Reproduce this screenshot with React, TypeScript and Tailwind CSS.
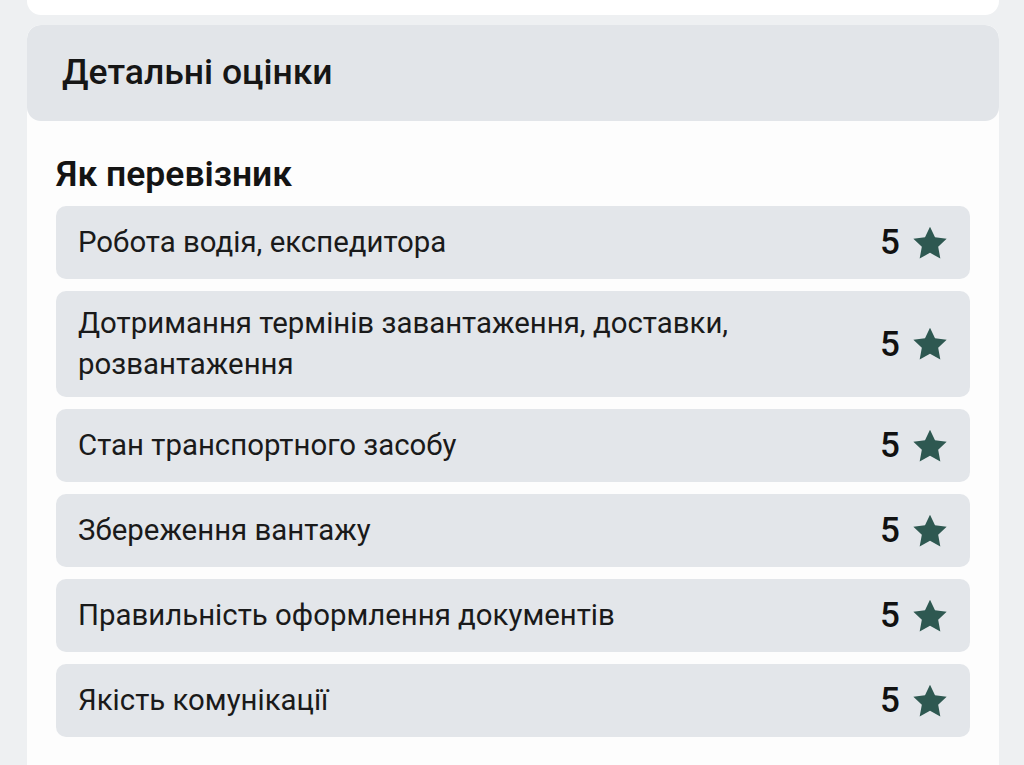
import { ReactNode } from 'react';

const ratings = [
  { id: 1, label: 'Робота водія, експедитора', score: 5 },
  { id: 2, label: 'Дотримання термінів завантаження, доставки, розвантаження', score: 5 },
  { id: 3, label: 'Стан транспортного засобу', score: 5 },
  { id: 4, label: 'Збереження вантажу', score: 5 },
  { id: 5, label: 'Правильність оформлення документів', score: 5 },
  { id: 6, label: 'Якість комунікації', score: 5 },
];

function StarIcon() {
  return (
    <svg viewBox="0 0 24 24" className="h-[40px] w-[40px] shrink-0" aria-hidden>
      <polygon
        fill="#2e5851"
        points="12,2.2 15,8.6 22,9.5 16.9,14.3 18.2,21.3 12,17.9 5.8,21.3 7.1,14.3 2,9.5 9,8.6"
      />
    </svg>
  );
}

function RatingRow({ label, score }: Readonly<{ label: string; score: number }>) {
  return (
    <div className="flex min-h-[73px] items-center justify-between gap-6 rounded-[10px] bg-[#e3e6ea] py-3 pl-[22px] pr-[20px]">
      <p className="text-[29.4px] leading-[41px] text-[#1a1a1a]">{label}</p>
      <div className="flex shrink-0 items-center gap-[10px]">
        <span className="text-[35px] font-medium leading-none text-[#111]">{score}</span>
        <StarIcon />
      </div>
    </div>
  );
}

function Card({ children }: Readonly<{ children: ReactNode }>) {
  return <section className="overflow-hidden rounded-t-[14px] bg-[#fdfdfd]">{children}</section>;
}

export default function App() {
  return (
    <div
      className="min-h-[765px] w-[1024px] bg-[#eef0f2] pl-[27px] pr-[25px]"
      style={{ fontFamily: 'Roboto, "Noto Sans", sans-serif' }}
    >
      <div className="mb-[10px] h-[15px] rounded-b-[14px] bg-white" />
      <Card>
        <header className="flex h-[96px] items-center rounded-[14px] bg-[#e2e5e9] px-[35px]">
          <h2 className="text-[35.5px] font-medium text-[#161616]">Детальні оцінки</h2>
        </header>
        <div className="px-[29px] pb-[40px] pt-[33px]">
          <h3 className="mb-[12px] text-[35.5px] font-semibold leading-[40px] text-[#141414]">Як перевізник</h3>
          <div className="flex flex-col gap-3">
            {ratings.map((r) => (
              <RatingRow key={r.id} label={r.label} score={r.score} />
            ))}
          </div>
        </div>
      </Card>
    </div>
  );
}
